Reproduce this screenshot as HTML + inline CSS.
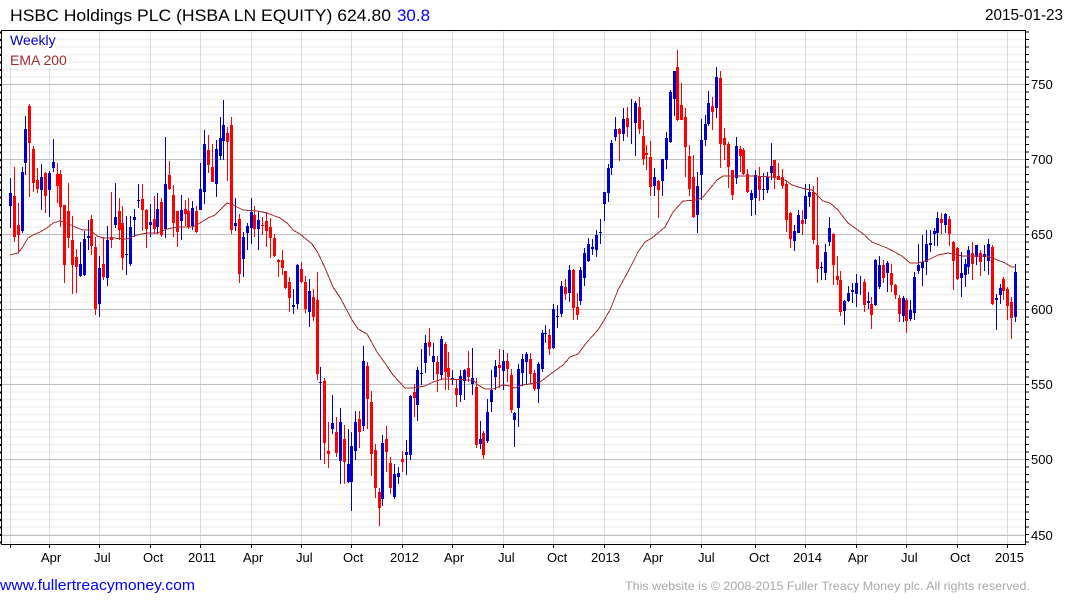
<!DOCTYPE html>
<html>
<head>
<meta charset="utf-8">
<title>HSBC Holdings PLC</title>
<style>
html,body{margin:0;padding:0;background:#fff;width:1075px;height:600px;overflow:hidden}
svg{display:block}
text{font-family:"Liberation Sans",Arial,sans-serif}
</style>
</head>
<body>
<svg width="1075" height="600" viewBox="0 0 1075 600" xmlns="http://www.w3.org/2000/svg">
<rect width="1075" height="600" fill="#fff"/>
<line x1="513.5" x2="513.5" y1="31.2" y2="544" stroke="#f0f0f0" stroke-width="1024" stroke-dasharray="1.6 5.9"/>
<path fill="none" stroke="#dadada" stroke-width="1" d="M10.5 31V544M49.5 31V544M99.5 31V544M150.5 31V544M200.5 31V544M251.5 31V544M301.5 31V544M351.5 31V544M402.5 31V544M452.5 31V544M503.5 31V544M553.5 31V544M604.5 31V544M650.5 31V544M701.5 31V544M755.5 31V544M805.5 31V544M856.5 31V544M906.5 31V544M957.5 31V544M1007.5 31V544"/>
<path fill="none" stroke="#bfbfbf" stroke-width="1" d="M2 84.5H1025M2 159.5H1025M2 234.5H1025M2 309.5H1025M2 384.5H1025M2 459.5H1025M2 535.5H1025"/>
<rect x="2" y="31" width="55" height="19" fill="#fff"/>
<rect x="2" y="50" width="65" height="18" fill="#fff"/>

<path fill="none" stroke="#ff0000" stroke-width="1" d="M14.5 167V242M18.5 203V253M29.5 104V197M33.5 146V192M37.5 168V193M45.5 172V213M57.5 163V203M60.5 170V227M64.5 205V283M68.5 183V248M72.5 216V294M76.5 249V293M91.5 215V255M95.5 237V315M103.5 237V280M111.5 192V248M119.5 198V240M122.5 206V270M142.5 184V231M146.5 209V248M154.5 196V234M161.5 198V237M169.5 161V190M173.5 185V237M177.5 211V247M185.5 200V226M188.5 198V229M196.5 206V233M208.5 135V173M212.5 144V182M227.5 127V181M231.5 117V234M239.5 214V283M254.5 206V237M262.5 217V235M266.5 212V247M270.5 218V258M274.5 234V257M278.5 259V277M282.5 250V275M285.5 271V289M289.5 277V312M301.5 262V283M305.5 276V313M313.5 289V321M317.5 272V380M324.5 378V464M328.5 422V468M336.5 417V457M344.5 425V484M359.5 411V448M367.5 362V429M371.5 391V476M375.5 444V498M379.5 488V526M386.5 426V472M390.5 457V494M402.5 451V472M414.5 384V417M429.5 328V356M437.5 356V392M445.5 342V390M448.5 352V390M456.5 380V407M468.5 351V382M476.5 378V448M483.5 431V459M499.5 349V388M507.5 353V382M511.5 369V413M530.5 353V384M534.5 370V391M549.5 329V355M565.5 279V300M573.5 269V320M577.5 293V320M619.5 128V161M627.5 107V137M639.5 97V134M643.5 120V165M646.5 145V170M650.5 141V196M658.5 180V218M677.5 50V121M681.5 83V120M685.5 108V177M689.5 145V196M693.5 155V218M712.5 97V130M720.5 71V168M724.5 128V160M728.5 142V188M732.5 170V200M740.5 146V172M743.5 148V175M747.5 169V193M759.5 167V201M774.5 160V189M778.5 163V180M782.5 169V189M786.5 180V232M790.5 212V248M802.5 210V235M813.5 186V244M817.5 177V283M833.5 233V285M837.5 256V285M840.5 271V316M864.5 279V312M871.5 297V329M941.5 213V234M949.5 216V246M953.5 241V290M957.5 247V280M972.5 242V280M980.5 250V276M992.5 245V305M1003.5 277V300M1007.5 287V320M1011.5 297V339M899.5 295V322M906.5 298V333M883.5 260V283M891.5 264V292M895.5 284V299"/>
<path fill="none" stroke="#ff0000" stroke-width="3" d="M14.5 196V237M18.5 225V235M29.5 106V143M33.5 149V183M37.5 180V189M45.5 173V196M57.5 174V186M60.5 174V207M64.5 205V265M68.5 211V238M72.5 240V265M76.5 257V267M91.5 219V246M95.5 247V309M103.5 264V277M111.5 237V240M119.5 211V230M122.5 223V258M142.5 199V210M146.5 210V229M154.5 219V229M161.5 202V235M169.5 175V189M173.5 195V223M177.5 211V232M185.5 209V214M188.5 211V227M196.5 211V232M208.5 150V165M212.5 167V182M227.5 133V142M231.5 125V230M239.5 219V274M254.5 215V229M262.5 225V226M266.5 221V231M270.5 227V238M274.5 238V256M278.5 260V262M282.5 260V268M285.5 271V288M289.5 282V298M301.5 269V282M305.5 282V309M313.5 297V317M317.5 300V374M324.5 381V443M328.5 451V454M336.5 432V453M344.5 439V462M359.5 419V432M367.5 366V399M371.5 402V454M375.5 450V488M379.5 492V508M386.5 439V452M390.5 463V488M402.5 459V462M414.5 392V398M429.5 342V347M437.5 362V374M445.5 344V372M448.5 368V377M456.5 388V395M468.5 368V377M476.5 387V445M483.5 433V455M499.5 365V368M507.5 361V369M511.5 375V410M530.5 359V374M534.5 373V389M549.5 335V349M565.5 287V294M573.5 270V308M577.5 307V315M619.5 129V134M627.5 118V127M639.5 107V129M643.5 136V159M646.5 153V155M650.5 157V187M658.5 181V190M677.5 67V120M681.5 105V120M685.5 117V147M689.5 156V189M693.5 177V217M712.5 106V112M720.5 78V144M724.5 138V145M728.5 144V167M732.5 170V195M740.5 149V156M743.5 150V174M747.5 174V192M759.5 177V190M774.5 160V178M778.5 176V180M782.5 177V186M786.5 184V220M790.5 213V239M802.5 220V224M813.5 192V240M817.5 245V269M833.5 234V265M837.5 276V280M840.5 280V312M864.5 282V305M871.5 304V315M941.5 219V223M949.5 219V234M953.5 242V261M957.5 248V279M972.5 253V264M980.5 253V262M992.5 247V304M1003.5 279V291M1007.5 289V306M1011.5 302V318M899.5 298V314M906.5 300V321M883.5 265V278M891.5 273V285M895.5 285V295"/>
<path fill="none" stroke="#0000cd" stroke-width="1" d="M10.5 178V228M22.5 167V233M25.5 116V175M41.5 164V210M49.5 171V217M53.5 139V172M80.5 242V277M84.5 231V276M88.5 220V250M99.5 256V317M107.5 226V286M115.5 183V228M126.5 216V275M130.5 216V266M134.5 209V237M138.5 184V208M150.5 204V237M157.5 193V234M165.5 137V238M181.5 195V240M192.5 201V230M200.5 163V210M204.5 130V204M216.5 140V197M220.5 117V160M223.5 100V160M235.5 198V231M243.5 232V277M247.5 223V250M251.5 198V244M258.5 212V250M293.5 289V314M297.5 264V309M309.5 279V327M320.5 367V460M332.5 395V434M340.5 408V484M348.5 429V483M351.5 432V511M355.5 411V460M363.5 346V431M382.5 435V506M394.5 464V499M398.5 467V484M406.5 440V475M410.5 395V460M417.5 367V421M421.5 349V385M425.5 335V373M433.5 343V380M441.5 336V380M452.5 370V385M460.5 370V402M464.5 369V400M472.5 348V395M480.5 421V449M487.5 399V443M491.5 370V412M495.5 360V390M503.5 350V390M514.5 412V447M518.5 364V427M522.5 354V386M526.5 352V384M538.5 362V403M542.5 330V372M545.5 325V343M553.5 304V349M557.5 305V328M561.5 281V317M569.5 265V302M580.5 267V305M584.5 248V286M588.5 238V262M592.5 239V255M596.5 230V257M600.5 219V244M604.5 192V221M608.5 164V202M611.5 140V175M615.5 117V141M623.5 108V141M631.5 99V144M635.5 101V156M654.5 168V196M662.5 159V196M666.5 132V169M670.5 90V143M674.5 71V116M697.5 172V233M701.5 119V200M705.5 115V146M708.5 91V126M716.5 67V118M736.5 137V184M751.5 190V216M755.5 170V215M763.5 173V200M767.5 172V193M771.5 143V180M794.5 225V251M798.5 210V233M805.5 184V224M809.5 184V207M821.5 262V280M825.5 244V280M829.5 217V246M844.5 300V325M848.5 286V302M852.5 283V303M856.5 274V307M860.5 276V295M868.5 292V309M875.5 259V306M879.5 256V289M887.5 261V292M903.5 296V322M910.5 300V321M914.5 272V320M918.5 244V274M922.5 235V286M926.5 230V275M930.5 230V252M934.5 228V246M937.5 212V246M945.5 213V233M961.5 252V297M965.5 259V287M968.5 246V274M976.5 245V265M984.5 245V271M988.5 239V275M996.5 294V330M1000.5 284V304M1015.5 264V322"/>
<path fill="none" stroke="#0000cd" stroke-width="3" d="M10.5 193V206M22.5 172V231M25.5 129V163M41.5 177V190M49.5 173V190M53.5 162V168M80.5 264V276M84.5 239V275M88.5 236V238M99.5 268V304M107.5 240V278M115.5 217V225M126.5 254V255M130.5 227V264M134.5 217V220M138.5 200V201M150.5 222V225M157.5 209V227M165.5 184V229M181.5 210V221M192.5 208V226M200.5 189V210M204.5 144V192M216.5 149V184M220.5 138V156M223.5 125V141M235.5 223V226M243.5 237V259M247.5 226V233M251.5 212V228M258.5 220V229M293.5 305V307M297.5 265V304M309.5 291V312M320.5 382V383M332.5 423V429M340.5 422V461M348.5 464V482M351.5 446V482M355.5 422V451M363.5 361V426M382.5 443V499M394.5 474V497M398.5 473V477M406.5 452V455M410.5 396V455M417.5 370V405M421.5 373V374M425.5 343V363M433.5 356V362M441.5 339V375M452.5 378V380M460.5 376V395M464.5 370V381M472.5 378V384M480.5 439V444M487.5 412V441M491.5 390V402M495.5 366V377M503.5 361V371M514.5 413V420M518.5 369V408M522.5 359V373M526.5 354V362M538.5 364V389M542.5 333V369M545.5 333V334M553.5 309V348M557.5 316V317M561.5 286V314M569.5 270V293M580.5 270V301M584.5 253V278M588.5 244V261M592.5 247V249M596.5 235V250M600.5 232V233M604.5 192V204M608.5 168V193M611.5 143V168M615.5 129V137M623.5 119V134M635.5 103V123M654.5 177V186M662.5 159V181M666.5 138V160M670.5 92V142M674.5 71V99M697.5 186V215M701.5 140V175M705.5 124V140M708.5 103V124M716.5 77V108M736.5 146V178M751.5 193V200M755.5 175V198M763.5 189V190M767.5 177V190M771.5 166V173M794.5 231V241M798.5 215V233M805.5 196V219M809.5 192V197M821.5 267V268M825.5 252V273M829.5 228V242M844.5 301V311M848.5 293V301M852.5 290V292M856.5 283V294M868.5 301V303M875.5 260V305M879.5 265V287M887.5 263V273M903.5 298V316M910.5 310V319M914.5 277V313M918.5 265V271M922.5 262V268M926.5 244V262M930.5 243V245M934.5 231V234M937.5 218V233M945.5 214V225M961.5 273V278M965.5 264V275M968.5 250V267M976.5 245V257M984.5 254V257M988.5 244V261M996.5 298V300M1000.5 288V295M1015.5 272V317"/>

<polyline fill="none" stroke="#a52a2a" stroke-width="1" shape-rendering="crispEdges" points="10,255 18,253 22,248 28,238 33,235 40,232 47,228 53,223 60,221 67,223 75,227 83,230 90,230 97,236 103,238 112,238 127,239 137,235 147,233 157,233 167,229 177,227 193,227 200,223 208,218 215,215 222,208 227,203 233,205 243,210 257,211 267,213 280,218 287,223 293,230 300,234 312,244 318,253 325,268 333,287 341,299 352,320 358,329 367,334 377,352 387,366 393,375 405,388 413,388 425,386 433,382 443,379 473,380 478,385 485,389 493,389 503,385 510,386 515,388 522,385 530,384 540,382 552,373 563,365 570,357 578,354 587,342 598,330 603,322 610,310 618,290 630,268 638,252 645,242 652,238 658,233 665,227 673,212 683,201 697,200 703,197 717,180 723,176 753,176 773,177 785,180 792,185 805,189 812,190 823,201 830,203 838,210 848,223 862,233 872,242 887,248 902,256 910,263 918,263 928,260 938,255 948,253 962,256 987,256 995,259 1005,263 1012,267 1016,267"/>

<path fill="none" stroke="#000" stroke-width="1" d="M1.5 30V544.5M1025.5 30V544.5M1 30.5H1026M1 544.5H1026"/>
<line x1="0.5" x2="0.5" y1="31.5" y2="544" stroke="#000" stroke-width="1" stroke-dasharray="2 5.5"/>
<line x1="1027.5" x2="1027.5" y1="31.5" y2="544" stroke="#000" stroke-width="3" stroke-dasharray="1 6.5"/>
<path fill="none" stroke="#000" stroke-width="1" d="M10.5 545V548M49.5 545V548M99.5 545V548M150.5 545V548M200.5 545V548M251.5 545V548M301.5 545V548M351.5 545V548M402.5 545V548M452.5 545V548M503.5 545V548M553.5 545V548M604.5 545V548M650.5 545V548M701.5 545V548M755.5 545V548M805.5 545V548M856.5 545V548M906.5 545V548M957.5 545V548M1007.5 545V548"/>

<text x="10" y="21" font-size="17" fill="#000" textLength="381" lengthAdjust="spacingAndGlyphs">HSBC Holdings PLC (HSBA LN EQUITY) 624.80</text>
<text x="397" y="21" font-size="17" fill="#0000ff" textLength="33" lengthAdjust="spacingAndGlyphs">30.8</text>
<text x="985" y="20" font-size="15.3" fill="#000" textLength="78" lengthAdjust="spacingAndGlyphs">2015-01-23</text>
<text x="10" y="45" font-size="14" fill="#0000cd">Weekly</text>
<text x="10" y="65" font-size="14" fill="#a52a2a">EMA 200</text>

<g font-size="13" fill="#000">
<text x="1031" y="89">750</text>
<text x="1031" y="164">700</text>
<text x="1031" y="239">650</text>
<text x="1031" y="314">600</text>
<text x="1031" y="389">550</text>
<text x="1031" y="464">500</text>
<text x="1031" y="540">450</text>
<text x="41" y="562">Apr</text>
<text x="94" y="562">Jul</text>
<text x="143" y="562">Oct</text>
<text x="188" y="562">2011</text>
<text x="243" y="562">Apr</text>
<text x="296" y="562">Jul</text>
<text x="343" y="562">Oct</text>
<text x="390" y="562">2012</text>
<text x="444" y="562">Apr</text>
<text x="498" y="562">Jul</text>
<text x="547" y="562">Oct</text>
<text x="591" y="562">2013</text>
<text x="643" y="562">Apr</text>
<text x="698" y="562">Jul</text>
<text x="749" y="562">Oct</text>
<text x="793" y="562">2014</text>
<text x="848" y="562">Apr</text>
<text x="901" y="562">Jul</text>
<text x="950" y="562">Oct</text>
<text x="995" y="562">2015</text>
</g>
<text x="0" y="590" font-size="15" fill="#0000ff" textLength="195" lengthAdjust="spacingAndGlyphs">www.fullertreacymoney.com</text>
<text x="625" y="590" font-size="12" fill="#a8a8a8" textLength="405" lengthAdjust="spacingAndGlyphs">This website is © 2008-2015 Fuller Treacy Money plc. All rights reserved.</text>
</svg>
</body>
</html>
